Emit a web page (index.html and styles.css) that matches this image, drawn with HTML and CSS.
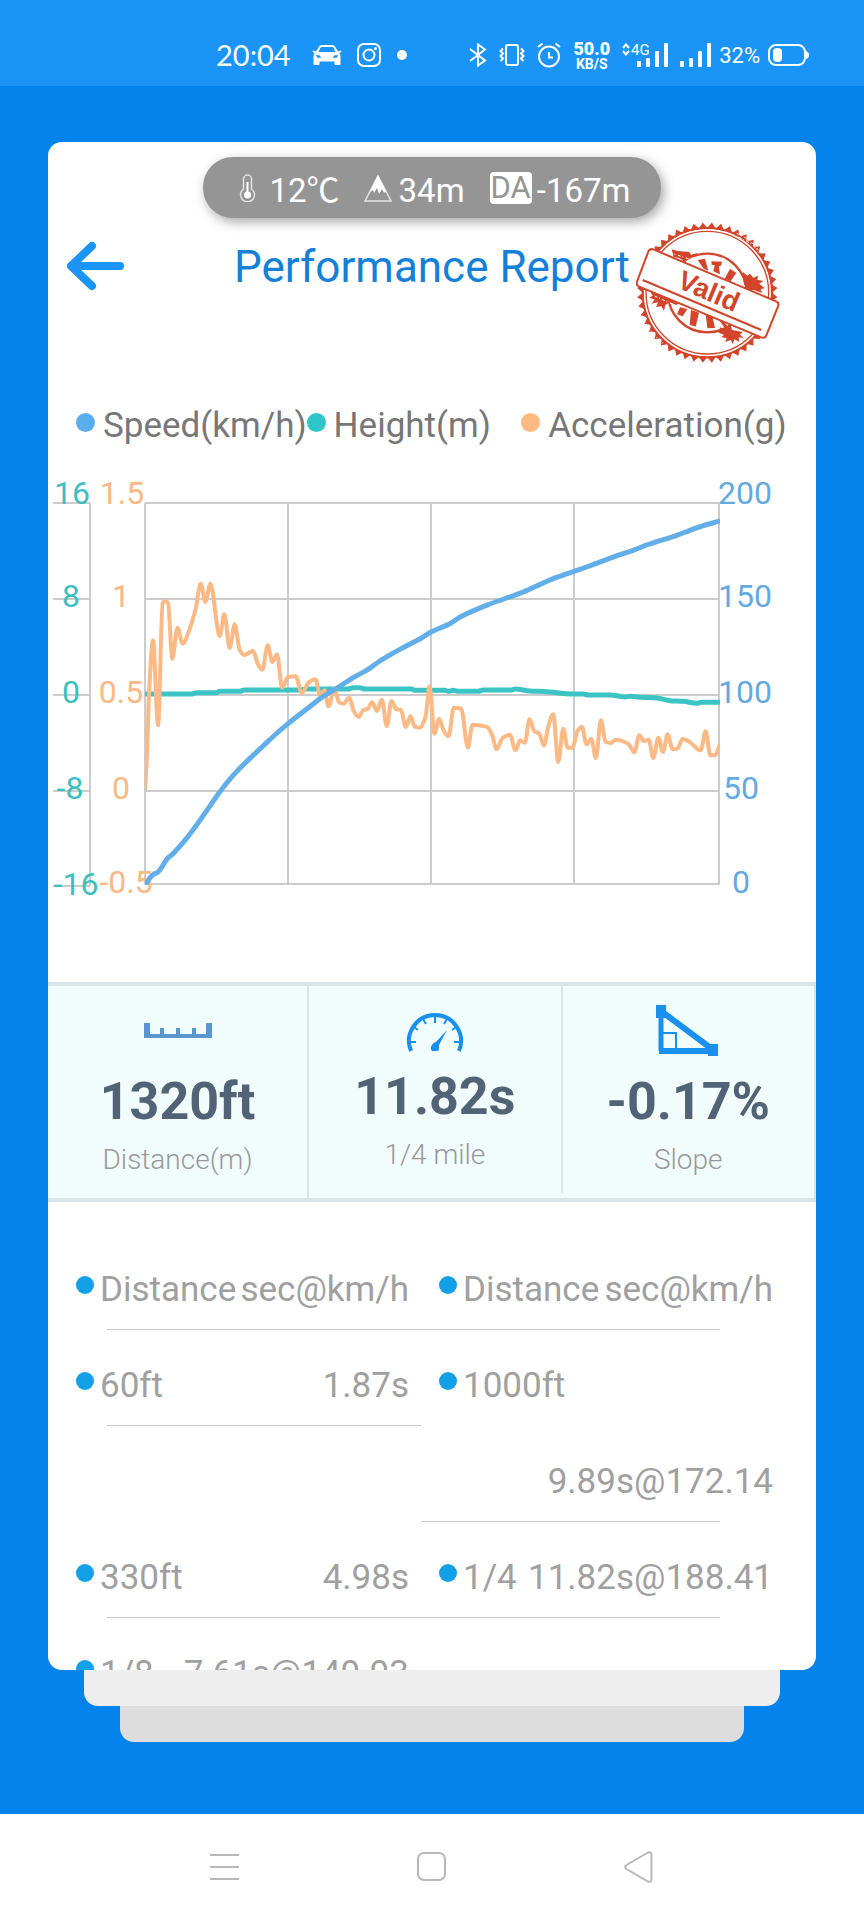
FILE: index.html
```html
<!DOCTYPE html>
<html lang="en">
<head>
    <meta charset="UTF-8">
    <meta name="viewport" content="width=device-width, initial-scale=1.0">
    <title>Performance Report</title>
    <link rel="stylesheet" href="styles.css">
</head>
<body>
    <div class="status-bar">
        <div class="status-left">
            <span class="clock">20:04</span>
            <svg class="car" width="30" height="22" viewBox="0 0 30 22" fill="#fff">
                <path d="M7 2.500Q8 1 10 1h10q2 0 3 1.500l3 5 3-1 .5 1.500-2.500 1q1.500 1 1.500 3v8q0 1-1 1h-4q-1 0-1-1v-2.500h-15V20q0 1-1 1h-4q-1 0-1-1v-8q0-2 1.500-3L.5 8 1 6.500l3 1zM8.500 3.500 6.500 8h17l-2-4.500Q21 3 20 3H10q-1 0-1.500.5zM4 11l1 2.500 4 .5-1-2.500zM26 11l-1 2.500-4 .5 1-2.500z" fill-rule="evenodd"/>
            </svg>
            <svg class="insta" width="24" height="24" viewBox="0 0 24 24" fill="none" stroke="#fff" stroke-width="2">
                <rect x="1" y="1" width="22" height="22" rx="6"/>
                <circle cx="12" cy="12" r="5.500"/>
                <circle cx="18.500" cy="5.500" r="1.500" fill="#fff" stroke="none"/>
            </svg>
            <span class="more-dot"></span>
        </div>
        <div class="status-right">
            <svg width="18" height="24" viewBox="0 0 18 24" fill="none" stroke="#fff" stroke-width="2">
                <path d="M1 6l15 11.500L9 22.500V1.500L16 6.500 1 18"/>
            </svg>
            <svg width="26" height="24" viewBox="0 0 26 24" fill="none" stroke="#fff" stroke-width="2">
                <rect x="7" y="2" width="12" height="20" rx="2"/>
                <path d="M4 5.500L1.500 8 4 10.500 1.500 13 4 15.500 1.500 18M22 5.500L24.500 8 22 10.500 24.500 13 22 15.500 24.500 18" stroke-width="2"/>
            </svg>
            <svg width="24" height="26" viewBox="0 0 24 26" fill="none" stroke="#fff" stroke-width="2">
                <circle cx="12" cy="14.500" r="10"/>
                <path d="M12 10v5.500h4M1 5l4.500-3.500M23 5l-4.500-3.500"/>
            </svg>
            <div class="net-speed"><b>50.0</b><small>KB/S</small></div>
            <svg width="46" height="26" viewBox="0 0 46 26" fill="#fff">
                <path d="M1 6l3-3.500L7 6M1 9l3 3.500L7 9" fill="none" stroke="#fff" stroke-width="2"/>
                <text x="9" y="13" class="net-type">4G</text>
                <rect x="15" y="19" width="4" height="6" rx="1"/>
                <rect x="24" y="16" width="4" height="9" rx="1"/>
                <rect x="33" y="9" width="4" height="16" rx="1"/>
                <rect x="42" y="1" width="4" height="24" rx="1"/>
            </svg>
            <svg width="31" height="26" viewBox="0 0 31 26" fill="#fff">
                <rect x="0" y="19" width="4" height="6" rx="1"/>
                <rect x="9" y="16" width="4" height="9" rx="1"/>
                <rect x="18" y="9" width="4" height="16" rx="1"/>
                <rect x="27" y="1" width="4" height="24" rx="1"/>
            </svg>
            <span class="battery-text">32%</span>
            <svg width="41" height="24" viewBox="0 0 41 24">
                <rect x="1" y="2" width="36" height="20" rx="7" fill="none" stroke="#fff" stroke-width="2"/>
                <path d="M38 8q3 1 3 4t-3 4z" fill="#fff"/>
                <rect x="5" y="5" width="9" height="14" rx="4" fill="#fff"/>
            </svg>
        </div>
    </div>

    <main class="screen">
        <div class="card">
            <div class="weather">
                <svg width="17" height="28" viewBox="0 0 17 28">
                    <path d="M4.500 15V5a4 4 0 0 1 8 0v10a7 7 0 1 1-8 0z" fill="none" stroke="#e2e2e2" stroke-width="1.500"/>
                    <path d="M8.500 8v12" stroke="#fff" stroke-width="2"/>
                    <circle cx="8.500" cy="21" r="3.500" fill="#fff"/>
                </svg>
                <span class="temp">12℃</span>
                <svg width="28" height="28" viewBox="0 0 28 28">
                    <path d="M14 2L27 27H1z" fill="none" stroke="#e2e2e2" stroke-width="1.500"/>
                    <path d="M14 1l8 16-2 2-2-4-3 5-2-6-3 5-1-3-3 2z" fill="#fff"/>
                </svg>
                <span class="alt">34m</span>
                <span class="da">DA</span>
                <span>-167m</span>
            </div>

            <header class="header">
                <button class="back" aria-label="Back">
                    <svg width="58" height="60" viewBox="0 0 58 60" fill="none" stroke="#1a94f6" stroke-width="8" stroke-linecap="round" stroke-linejoin="round">
                        <path d="M25 9L4 29l21 20M5 29h48"/>
                    </svg>
                </button>
                <h1>Performance Report</h1>
                <svg class="stamp" viewBox="48 36 432 424">
                    <g fill="none" stroke="#d2452b">
                        <path id="teeth" fill="#d2452b" fill-rule="evenodd" stroke="none"/>
                        <circle cx="262" cy="248" r="194" stroke-width="6"/>
                        <circle cx="262" cy="248" r="184" stroke-width="4"/>
                        <circle cx="262" cy="249" r="118" stroke-width="7"/>
                    </g>
                    <g fill="#d2452b">
                        <path d="M233 150l22-4 10 36-14-6zM274 154l32 1-3 12-6 2 3 24-20-9 4-18-9-2zM330 177l19 11-17 26-18-8zM180 292l22 5-14 22-17-6zM213 300l24 8-10 42-18-6zM257 312l20 5 8 37-23 1zM296 328l12 4 14 17-8 5z"/>
                        <path d="M155 118l18 5 35 3 5 8 22-6-20 14-22 12-15-10-17-3zM368 185l14 12 8-6 10 12 14-6-2 12 18 4-12 8 16 14-12 2 4 12-22-8-20-2-12-16zM90 242l28 7 26 12 18 4 20 14-14 6-18-8-14 8-4 18-8-14-16 2 6-14-20 4 10-12-16-6 10-6zM300 352l16 6 16-12 4 14 32 6-8 8 12 10-16-2 2 14-14-8-6 14-6-12-16 6 4-12-16-2 8-8-16-6z"/>
                    </g>
                    <g fill="none" stroke="#fff" stroke-width="3" stroke-dasharray="9 5 3 8">
                        <path d="M350 70q50 22 72 62M356 82q44 18 62 46M70 330q24 42 64 74M104 258l70 32M150 128l60 20"/>
                    </g>
                    <path d="M102 119L468 274q10 4 7 13L439 376q-4 10-15 6L56 229q-8-4-5-14L85 125q5-11 17-6z" fill="#fff" stroke="#d2452b" stroke-width="6"/>
                    <path d="M68 210L424 360" stroke="#d2452b" stroke-width="6"/>
                    <text x="168" y="232" transform="rotate(23 168 232)" class="stamp-text">Valid</text>
                </svg>
            </header>

            <ul class="legend">
                <li><i class="dot speed"></i>Speed(km/h)</li>
                <li><i class="dot height"></i>Height(m)</li>
                <li><i class="dot accel"></i>Acceleration(g)</li>
            </ul>

            <svg class="chart" viewBox="0 0 768 430">
                <g class="grid">
                    <path d="M97 33h575M97 129h575M97 225h575M97 321h575M97 414h575"/>
                    <path d="M97 33v381M240 33v381M383 33v381M526 33v381M671 33v381"/>
                    <path d="M42 33v383M5 33h37M5 129h37M5 225h37M5 321h37M5 416h37"/>
                </g>
                <g class="axis axis-height" text-anchor="middle">
                    <text x="24" y="34">16</text>
                    <text x="23" y="137">8</text>
                    <text x="23" y="233">0</text>
                    <text x="22" y="329">-8</text>
                    <text x="28" y="425">-16</text>
                </g>
                <g class="axis axis-accel" text-anchor="middle">
                    <text x="74" y="34">1.5</text>
                    <text x="73" y="137">1</text>
                    <text x="73" y="233">0.5</text>
                    <text x="73" y="329">0</text>
                    <text x="78" y="423">-0.5</text>
                </g>
                <g class="axis axis-speed" text-anchor="middle">
                    <text x="697" y="34">200</text>
                    <text x="697" y="137">150</text>
                    <text x="697" y="233">100</text>
                    <text x="693" y="329">50</text>
                    <text x="693" y="423">0</text>
                </g>
                <svg x="97" y="33" width="575" height="382" viewBox="316 128 1724 1146" preserveAspectRatio="none">
                    <path id="line-height" class="line"/>
                    <path id="line-accel" class="line"/>
                    <path id="line-speed" class="line"/>
                </svg>
            </svg>

            <section class="stats">
                <div class="stat">
                    <svg class="stat-icon" viewBox="0 0 68 52" fill="#5b95d0">
                        <path d="M0 18h6v11h10v-6h4v6h12v-6h4v6h12v-6h4v6h10V18h6v15H0z"/>
                    </svg>
                    <strong>1320ft</strong>
                    <span>Distance(m)</span>
                </div>
                <div class="stat stat-time">
                    <svg class="stat-icon" viewBox="0 0 68 47" fill="none" stroke="#1a90ee">
                        <path d="M10 46A26 26 0 1 1 58 46" stroke-width="4"/>
                        <path d="M9 37h6M13 22l4 3M22 14l3 5M34 11v7M46 14l-3 5M55 22l-4 3M59 37h-6" stroke-width="2"/>
                        <path d="M30 42q1-4 5-5l11-12-8 15q1 3-1 6h-6q-2-2-1-4z" fill="#1a90ee" stroke="none"/>
                    </svg>
                    <strong>11.82s</strong>
                    <span>1/4 mile</span>
                </div>
                <div class="stat">
                    <svg class="stat-icon" viewBox="0 0 68 52" fill="none" stroke="#1a90ee">
                        <path d="M7 8v38" stroke-width="5"/>
                        <path d="M5 46h52" stroke-width="6"/>
                        <path d="M7 6l51 38" stroke-width="6"/>
                        <path d="M9 28h13v16" stroke-width="2"/>
                        <path d="M2 0h10v13H2zM54 39h10v12H54z" fill="#1a90ee" stroke="none"/>
                    </svg>
                    <strong>-0.17%</strong>
                    <span>Slope</span>
                </div>
            </section>

            <table class="results">
                <tr>
                    <th><div><i class="dot"></i>Distance <span>sec@km/h</span></div></th>
                    <th><div><i class="dot"></i>Distance <span>sec@km/h</span></div></th>
                </tr>
                <tr>
                    <td><div><i class="dot"></i>60ft <span>1.87s</span></div></td>
                    <td class="open"><div><i class="dot"></i>1000ft</div></td>
                </tr>
                <tr>
                    <td class="open"></td>
                    <td><div><span>9.89s@172.14</span></div></td>
                </tr>
                <tr>
                    <td><div><i class="dot"></i>330ft <span>4.98s</span></div></td>
                    <td><div><i class="dot"></i>1/4 <span>11.82s@188.41</span></div></td>
                </tr>
                <tr>
                    <td><div><i class="dot"></i>1/8 <span>7.61s@149.93</span></div></td>
                    <td class="open"></td>
                </tr>
            </table>
        </div>
        <div class="layer layer-1"></div>
        <div class="layer layer-2"></div>
    </main>

    <nav class="nav-bar">
        <button aria-label="Recent apps">
            <svg width="30" height="32" viewBox="0 0 30 32"><path d="M0 4h29M0 16h29M0 28h29"/></svg>
        </button>
        <button aria-label="Home">
            <svg width="30" height="32" viewBox="0 0 30 32"><rect x="1" y="2" width="27" height="27" rx="6"/></svg>
        </button>
        <button aria-label="Back">
            <svg width="30" height="32" viewBox="0 0 30 32"><path d="M24 1.500L2.500 14q-3 2 0 4L24 30.500q3.500 1 3.500-2v-25q0-3-3.500-2z"/></svg>
        </button>
    </nav>

    <script>
        // ===== chart lines =====
        const accel = [
            316,990, 322,880, 328,700, 340,540, 355,795, 369,428, 377,422, 385,428, 398,595, 413,502,
            429,550, 450,505, 468,445, 483,370, 497,425, 512,370, 540,527, 554,462, 570,563, 585,492,
            600,570, 614,584, 640,572, 655,613, 668,628, 684,555, 698,605, 712,582, 727,682, 745,650,
            768,648, 786,698, 808,665, 827,657, 842,708, 854,690, 866,738, 884,685, 898,726, 912,730,
            928,712, 942,752, 956,770, 970,750, 984,745, 997,726, 1011,752, 1026,718, 1041,797, 1055,722,
            1070,747, 1083,748, 1098,800, 1112,767, 1125,799, 1140,802, 1157,770, 1169,678, 1184,820,
            1198,775, 1211,810, 1226,828, 1242,742, 1264,745, 1284,862, 1298,793, 1325,796, 1342,800,
            1357,825, 1370,867, 1388,833, 1410,823, 1427,870, 1441,840, 1455,847, 1469,777, 1483,812,
            1498,820, 1512,855, 1526,795, 1540,762, 1555,905, 1570,805, 1583,862, 1598,862, 1612,813,
            1626,800, 1640,852, 1654,835, 1668,893, 1683,780, 1697,845, 1712,848, 1728,838, 1765,850,
            1783,876, 1798,825, 1812,842, 1826,838, 1840,893, 1855,832, 1869,875, 1883,822, 1898,867,
            1912,865, 1928,836, 1945,842, 1982,870, 1997,813, 2011,885, 2025,885, 2040,850
        ];
        const speed = [
            316,1273, 340,1243, 355,1235, 384,1194, 398,1182, 440,1135, 465,1102, 512,1035, 540,995,
            585,940, 640,885, 670,857, 712,818, 745,790, 800,747, 842,714, 900,678, 940,652, 985,627,
            1020,602, 1080,567, 1145,533, 1172,516, 1230,490, 1265,468, 1345,433, 1455,393, 1490,377,
            1540,355, 1600,334, 1640,320, 1670,309, 1740,283, 1780,270, 1820,254, 1910,225, 1950,210,
            1990,196, 2040,182
        ];
        const height = [
            316,701, 455,701, 470,697, 530,697, 540,693, 600,693, 615,689, 780,689, 800,686, 925,686,
            940,682, 960,682, 975,686, 1115,686, 1125,690, 1215,690, 1225,693, 1240,690, 1255,693,
            1315,693, 1330,689, 1415,689, 1425,686, 1470,692, 1520,694, 1550,697, 1590,701, 1630,701,
            1645,704, 1712,704, 1740,708, 1755,710, 1770,708, 1800,711, 1845,712, 1890,721, 1930,723,
            1970,729, 1985,726, 2040,726
        ];

        // smooth curve that never overshoots a sample
        function drawLine(id, data) {
            const p = [];
            for (let i = 0; i < data.length; i += 2) p.push([data[i], data[i + 1]]);
            const slope = i => (p[i + 1][1] - p[i][1]) / (p[i + 1][0] - p[i][0]);
            const m = p.map((_, i) => {
                if (i === 0) return slope(0);
                if (i === p.length - 1) return slope(i - 1);
                const a = slope(i - 1), b = slope(i);
                return a * b <= 0 ? 0 : 2 * a * b / (a + b);
            });
            let d = 'M' + p[0];
            for (let i = 1; i < p.length; i++) {
                const h = (p[i][0] - p[i - 1][0]) / 3;
                d += 'C' + [p[i - 1][0] + h, p[i - 1][1] + m[i - 1] * h,
                            p[i][0] - h, p[i][1] - m[i] * h, p[i][0], p[i][1]];
            }
            document.getElementById(id).setAttribute('d', d);
        }
        drawLine('line-height', height);
        drawLine('line-accel', accel);
        drawLine('line-speed', speed);

        // ===== stamp edge =====
        let edge = '';
        const teeth = 48;
        for (let i = 0; i < teeth * 2; i++) {
            const a = Math.PI * i / teeth;
            const r = i % 2 ? 211 : 194;
            edge += (i ? 'L' : 'M') + (262 + r * Math.cos(a)) + ' ' + (248 + r * Math.sin(a));
        }
        edge += 'zM454 248a192 192 0 1 0-384 0a192 192 0 1 0 384 0z';
        document.getElementById('teeth').setAttribute('d', edge);
    </script>
</body>
</html>
```
FILE: styles.css
```css
* {
    box-sizing: border-box;
}
body {
    margin: 0;
    height: 100vh;
    display: flex;
    flex-direction: column;
    background: #0383eb;
    font-family: Roboto, "Noto Sans CJK SC", sans-serif;
    overflow: hidden;
}
svg {
    display: block;
    flex-shrink: 0;
}
button {
    border: none;
    padding: 0;
    background: none;
    cursor: pointer;
}

/* status bar */
.status-bar {
    height: 86px;
    padding: 24px 55px 0 216px;
    display: flex;
    justify-content: space-between;
    align-items: center;
    background: #1a94f6;
    color: #fff;
}
.status-left,
.status-right {
    display: flex;
    align-items: center;
}
.status-right {
    gap: 12px;
}
.clock {
    font-family: Lato, sans-serif;
    font-size: 29px;
    line-height: 36px;
}
.car {
    margin-left: 21px;
}
.insta {
    margin: 0 16px 0 15px;
}
.more-dot {
    width: 10px;
    height: 10px;
    border-radius: 50%;
    background: #fff;
}
.net-speed {
    display: flex;
    flex-direction: column;
    align-items: center;
    font-weight: bold;
}
.net-speed b {
    font-size: 18px;
    line-height: 17px;
}
.net-speed small {
    font-size: 14px;
    line-height: 14px;
}
.net-type {
    font-size: 15px;
}
.battery-text {
    margin: 0 -4px;
    font-size: 22px;
}

/* card stack */
.screen {
    flex: 1;
    min-height: 0;
    padding: 56px 48px 72px;
    display: flex;
    flex-direction: column;
}
.card {
    position: relative;
    flex: 1;
    min-height: 0;
    overflow: hidden;
    background: #fff;
    border-radius: 14px;
}
.layer {
    height: 36px;
    border-radius: 0 0 14px 14px;
}
.layer-1 {
    margin: 0 36px;
    background: #eee;
}
.layer-2 {
    margin: 0 72px;
    background: #ddd;
}

/* weather pill */
.weather {
    width: fit-content;
    height: 61px;
    margin: 15px auto 0;
    padding: 6px 30px 0 36px;
    display: flex;
    align-items: center;
    border-radius: 30px;
    background: #959595;
    box-shadow: 3px 4px 12px rgba(0, 0, 0, 0.35);
    color: #fff;
    font-size: 33px;
    line-height: 38px;
    white-space: nowrap;
}
.weather svg {
    margin-bottom: 6px;
}
.temp {
    margin: 0 24px 0 13px;
}
.alt {
    margin: 0 25px 0 7px;
}
.da {
    height: 32px;
    margin: 0 5px 6px 0;
    padding: 0 1px;
    border-radius: 4px;
    background: #fff;
    color: #959595;
    font-size: 31px;
    line-height: 32px;
}

/* header */
.header {
    position: relative;
    margin-top: 19px;
    height: 60px;
}
.header h1 {
    margin: 0;
    color: #1580d8;
    font-size: 44px;
    font-weight: normal;
    line-height: 60px;
    text-align: center;
}
.back {
    position: absolute;
    left: 19px;
    top: 0;
}
.stamp {
    position: absolute;
    right: 36px;
    top: -15px;
    width: 144px;
}
.stamp-text {
    fill: #d2452b;
    font-family: "Liberation Sans", sans-serif;
    font-size: 82px;
    font-weight: bold;
}

/* chart */
.dot {
    flex-shrink: 0;
    width: 18px;
    height: 18px;
    margin: 0 6px 10px 0;
    border-radius: 50%;
    background: #12a0e6;
}
.legend {
    margin: 109px 0 0;
    padding: 0 0 0 28px;
    display: flex;
    list-style: none;
    color: #777;
    font-size: 35px;
    line-height: 40px;
    white-space: nowrap;
}
.legend li {
    display: flex;
    align-items: center;
    min-width: 29%;
}
.legend .dot {
    width: 19px;
    height: 19px;
    margin: 0 8px 7px 0;
}
.dot.speed {
    background: #5aaeee;
}
.dot.height {
    background: #2cc6c8;
}
.dot.accel {
    background: #ffb980;
}
.chart {
    width: 100%;
    margin: 24px 0 82px;
}
.grid {
    fill: none;
    stroke: #ccc;
    stroke-width: 2;
}
.axis {
    font-size: 32px;
}
.axis-height {
    fill: #3bbfc0;
}
.axis-accel {
    fill: #f9b884;
}
.axis-speed {
    fill: #64aae0;
}
.line {
    fill: none;
    stroke-width: 5;
    stroke-linejoin: round;
    vector-effect: non-scaling-stroke;
}
#line-height {
    stroke: #3cc4c5;
}
#line-accel {
    stroke: #fbb985;
    stroke-width: 4;
}
#line-speed {
    stroke: #62aee8;
}

/* stats */
.stats {
    display: grid;
    grid-template-columns: 34% 33% 33%;
    align-items: start;
    border-top: 4px solid #d9e4e6;
    border-bottom: 4px solid #d9e4e6;
    background: #f1fcfd;
}
.stat {
    padding: 19px 0 20px;
    display: flex;
    flex-direction: column;
    align-items: center;
    border-right: 2px solid #d9e4e6;
}
.stat-icon {
    width: 68px;
}
.stat strong {
    margin: 15px 0 10px;
    color: #526375;
    font-size: 52px;
    line-height: 60px;
}
.stat span {
    color: #999;
    font-size: 28px;
    font-weight: 300;
    line-height: 36px;
}

/* results */
.results {
    width: calc(100% - 71px);
    margin: 32px 43px 0 28px;
    border-collapse: collapse;
    table-layout: fixed;
    color: #a0a0a0;
    font-size: 35px;
    line-height: 80px;
    white-space: nowrap;
}
.results th,
.results td {
    height: 96px;
    padding: 16px 12px 0 0;
    font-weight: normal;
    text-align: left;
    background: linear-gradient(#c4c4c4, #c4c4c4) no-repeat right bottom / calc(100% - 31px) 1px;
}
.results th:first-child {
    width: 49.500%;
}
.results th + th,
.results td + td {
    padding: 16px 0 0 18px;
    background-position: left bottom;
    background-size: calc(100% - 53px) 1px;
}
.results .open {
    background: none;
}
.results div {
    display: flex;
    align-items: center;
}
.results span {
    margin-left: auto;
}

/* navigation bar */
.nav-bar {
    height: 106px;
    padding: 0 122px;
    display: flex;
    background: #fff;
}
.nav-bar button {
    flex: 1;
    display: flex;
    justify-content: center;
    align-items: center;
}
.nav-bar svg {
    fill: none;
    stroke: #b8b8b8;
    stroke-width: 2;
}
```
